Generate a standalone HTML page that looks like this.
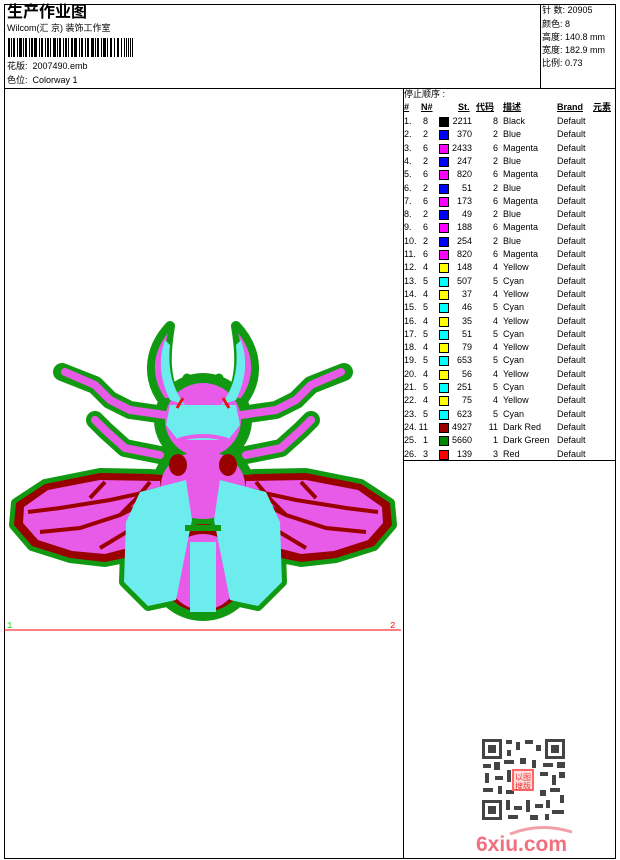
<!DOCTYPE html>
<html><head><meta charset="utf-8"><style>
body{margin:0;width:620px;height:860px;background:#fff;position:relative;font-family:"Liberation Sans","Noto Sans CJK SC",sans-serif;color:#000;overflow:hidden}
.a{position:absolute;white-space:nowrap;font-size:9px;line-height:11px}
.ln{position:absolute;background:#000}
.r{position:absolute;font-size:9px;line-height:11px;white-space:nowrap}
.sw{position:absolute;width:8px;height:8px;border:1px solid #000}
</style></head><body>
<div class="ln" style="left:4px;top:4px;width:612px;height:1px"></div>
<div class="ln" style="left:4px;top:858px;width:612px;height:1px"></div>
<div class="ln" style="left:4px;top:4px;width:1px;height:855px"></div>
<div class="ln" style="left:615px;top:4px;width:1px;height:855px"></div>
<div class="ln" style="left:540px;top:4px;width:1px;height:84px"></div>
<div class="ln" style="left:4px;top:88px;width:612px;height:1px"></div>
<div class="ln" style="left:403px;top:88px;width:1px;height:770px"></div>
<div class="ln" style="left:403px;top:460px;width:213px;height:1px"></div>

<div class="a" style="left:7px;top:3px;font-size:16px;line-height:19px;font-weight:bold">生产作业图</div>
<div class="a" style="left:7px;top:23px">Wilcom(汇 京) 装饰工作室</div>
<svg style="position:absolute;left:8px;top:38px" width="130" height="19">
<g fill="#000">
<rect x="0" y="0" width="2" height="19"/><rect x="3" y="0" width="1" height="19"/><rect x="5" y="0" width="2" height="19"/><rect x="9" y="0" width="1" height="19"/><rect x="11" y="0" width="3" height="19"/><rect x="15" y="0" width="1" height="19"/><rect x="17" y="0" width="2" height="19"/><rect x="21" y="0" width="1" height="19"/><rect x="23" y="0" width="2" height="19"/><rect x="26" y="0" width="3" height="19"/><rect x="31" y="0" width="1" height="19"/><rect x="33" y="0" width="2" height="19"/><rect x="37" y="0" width="1" height="19"/><rect x="39" y="0" width="2" height="19"/><rect x="42" y="0" width="1" height="19"/><rect x="45" y="0" width="3" height="19"/><rect x="49" y="0" width="1" height="19"/><rect x="51" y="0" width="2" height="19"/><rect x="55" y="0" width="1" height="19"/><rect x="57" y="0" width="2" height="19"/><rect x="60" y="0" width="1" height="19"/><rect x="63" y="0" width="2" height="19"/><rect x="66" y="0" width="3" height="19"/><rect x="71" y="0" width="1" height="19"/><rect x="73" y="0" width="2" height="19"/><rect x="77" y="0" width="1" height="19"/><rect x="79" y="0" width="2" height="19"/><rect x="83" y="0" width="3" height="19"/><rect x="87" y="0" width="1" height="19"/><rect x="89" y="0" width="2" height="19"/><rect x="93" y="0" width="1" height="19"/><rect x="95" y="0" width="3" height="19"/><rect x="99" y="0" width="1" height="19"/><rect x="102" y="0" width="2" height="19"/><rect x="106" y="0" width="1" height="19"/><rect x="109" y="0" width="2" height="19"/><rect x="113" y="0" width="1" height="19"/><rect x="116" y="0" width="1" height="19"/><rect x="118" y="0" width="1" height="19"/><rect x="120" y="0" width="1" height="19"/><rect x="122" y="0" width="1" height="19"/><rect x="124" y="0" width="1" height="19"/>
</g></svg>
<div class="a" style="left:7px;top:61px">花版:&nbsp; 2007490.emb</div>
<div class="a" style="left:7px;top:75px">色位:&nbsp; Colorway 1</div>

<div class="a" style="left:542px;top:5px">针 数: 20905</div>
<div class="a" style="left:542px;top:19px">颜色: 8</div>
<div class="a" style="left:542px;top:32px">高度: 140.8 mm</div>
<div class="a" style="left:542px;top:45px">宽度: 182.9 mm</div>
<div class="a" style="left:542px;top:58px">比例: 0.73</div>

<div class="a" style="left:404px;top:89px">停止顺序 :</div>
<div class="a" style="left:404px;top:102px;font-weight:bold;text-decoration:underline">#</div>
<div class="a" style="left:421px;top:102px;font-weight:bold;text-decoration:underline">N#</div>
<div class="a" style="left:458px;top:102px;font-weight:bold;text-decoration:underline">St.</div>
<div class="a" style="left:476px;top:102px;font-weight:bold;text-decoration:underline">代码</div>
<div class="a" style="left:503px;top:102px;font-weight:bold;text-decoration:underline">描述</div>
<div class="a" style="left:557px;top:102px;font-weight:bold;text-decoration:underline">Brand</div>
<div class="a" style="left:593px;top:102px;font-weight:bold;text-decoration:underline">元素</div>

<div id="t"></div>
<script>
var d=[[8,"#000",2211,"Black"],[2,"#0000ff",370,"Blue"],[6,"#ff00ff",2433,"Magenta"],[2,"#0000ff",247,"Blue"],[6,"#ff00ff",820,"Magenta"],[2,"#0000ff",51,"Blue"],[6,"#ff00ff",173,"Magenta"],[2,"#0000ff",49,"Blue"],[6,"#ff00ff",188,"Magenta"],[2,"#0000ff",254,"Blue"],[6,"#ff00ff",820,"Magenta"],[4,"#ffff00",148,"Yellow"],[5,"#00ffff",507,"Cyan"],[4,"#ffff00",37,"Yellow"],[5,"#00ffff",46,"Cyan"],[4,"#ffff00",35,"Yellow"],[5,"#00ffff",51,"Cyan"],[4,"#ffff00",79,"Yellow"],[5,"#00ffff",653,"Cyan"],[4,"#ffff00",56,"Yellow"],[5,"#00ffff",251,"Cyan"],[4,"#ffff00",75,"Yellow"],[5,"#00ffff",623,"Cyan"],[11,"#990000",4927,"Dark Red"],[1,"#008800",5660,"Dark Green"],[3,"#ff0000",139,"Red"]];
var h="";
for(var i=0;i<d.length;i++){var y=116+i*13.3;var r=d[i];
h+='<div class="r" style="left:404px;top:'+y+'px">'+(i+1)+'.</div>';
h+='<div class="r" style="left:414px;top:'+y+'px;width:14px;text-align:right">'+r[0]+'</div>';
h+='<div class="sw" style="left:439px;top:'+(y+1)+'px;background:'+r[1]+'"></div>';
h+='<div class="r" style="left:448px;top:'+y+'px;width:24px;text-align:right">'+r[2]+'</div>';
h+='<div class="r" style="left:484px;top:'+y+'px;width:14px;text-align:right">'+r[0]+'</div>';
h+='<div class="r" style="left:503px;top:'+y+'px">'+r[3]+'</div>';
h+='<div class="r" style="left:557px;top:'+y+'px">Default</div>';}
document.getElementById("t").innerHTML=h;
</script>

<svg style="position:absolute;left:0;top:0" width="620" height="860">
<defs>
<path id="wing" d="M203,478 L150,474 L100,473 L45,484 L16,503 L14,525 L32,546 L70,558 L105,562 L130,557 L175,522 Z"/>
<path id="ely" d="M186,480 L140,492 L126,522 L124,582 L148,606 L176,600 L192,520 Z"/>
<path id="horn" d="M164,402 C148,382 146,352 170,326 C166,350 163,378 178,402 Z"/>
</defs>
<g fill="#119911" stroke="#119911" stroke-width="10" stroke-linejoin="round" stroke-linecap="round">
<use href="#wing"/><use href="#wing" transform="translate(406,0) scale(-1,1)"/>
<use href="#ely"/><use href="#ely" transform="translate(406,0) scale(-1,1)"/>
<use href="#horn"/><use href="#horn" transform="translate(406,0) scale(-1,1)"/>
<ellipse cx="203" cy="568" rx="50" ry="48"/>
<ellipse cx="203" cy="420" rx="44" ry="42"/>
<ellipse cx="203" cy="485" rx="46" ry="38"/>
<path fill="none" stroke-width="18" d="M165,415 L130,410 L110,400 L95,385 L62,372 M160,455 L125,448 L105,430 L95,420 M241,415 L276,410 L296,400 L311,385 L344,372 M246,455 L281,448 L301,430 L311,420"/>
<path stroke-width="9" d="M187,392 L187,378 M219,392 L219,378"/>
</g>
<g fill="#990000"><use href="#wing"/><use href="#wing" transform="translate(406,0) scale(-1,1)"/></g>
<g id="wl">
<path fill="#e85ae8" d="M160,481 L100,480 L48,490 L24,507 L23,523 L38,540 L72,551 L105,554 L128,548 L165,520 Z"/>
<path fill="none" stroke="#990000" stroke-width="4" d="M165,488 L110,500 L60,508 L28,512 M160,495 L120,515 L80,528 L40,532 M160,500 L130,530 L100,548 M150,482 L135,500 L120,515 M105,482 L90,498"/>
</g>
<use href="#wl" transform="translate(406,0) scale(-1,1)"/>
<ellipse cx="203" cy="568" rx="45" ry="44" fill="#990000"/>
<g fill="#e85ae8">
<ellipse cx="203" cy="572" rx="37" ry="38"/>
<ellipse cx="203" cy="485" rx="42" ry="34"/>
<ellipse cx="203" cy="420" rx="38" ry="37"/>
<path d="M165,398 C152,380 150,355 168,333 C163,352 161,375 175,398 Z"/>
<path d="M241,398 C254,380 256,355 238,333 C243,352 245,375 231,398 Z"/>
<path fill="none" stroke="#e85ae8" stroke-width="8" stroke-linecap="round" d="M165,415 L130,410 L110,400 L95,385 L65,372 M160,455 L125,448 L105,430 L95,420 M241,415 L276,410 L296,400 L311,385 L341,372 M246,455 L281,448 L301,430 L311,420"/>
</g>
<g fill="#6cecec">
<rect x="190" y="542" width="26" height="70"/>
<path d="M170,400 C160,380 158,360 165,340 L170,345 C168,365 170,385 185,405 Z"/>
<path d="M236,400 C246,380 248,360 241,340 L236,345 C238,365 236,385 221,405 Z"/>
<path d="M170,405 L236,405 L240,425 L228,440 L178,440 L166,425 Z"/>
<use href="#ely"/><use href="#ely" transform="translate(406,0) scale(-1,1)"/>
</g>
<path d="M178,440 Q203,432 228,440" stroke="#e85ae8" stroke-width="4" fill="none"/>
<g fill="#990000"><ellipse cx="178" cy="465" rx="9" ry="11"/><ellipse cx="228" cy="465" rx="9" ry="11"/></g>
<path d="M183,398 L177,408 M223,398 L229,408" stroke="#ee1111" stroke-width="3"/>
<path d="M185,528 L221,528" stroke="#119911" stroke-width="6"/>
<line x1="4" y1="630" x2="401" y2="630" stroke="#ff0000" stroke-width="1"/>
<text x="7" y="628" font-family="Liberation Mono" font-size="9" fill="#00dd00">1</text>
<text x="390" y="628" font-family="Liberation Mono" font-size="9" fill="#ff0000">2</text>
<g fill="#444">
<rect x="482" y="739" width="20" height="20"/><rect x="545" y="739" width="20" height="20"/><rect x="482" y="800" width="20" height="20"/>
</g>
<g fill="#fff"><rect x="485" y="742" width="14" height="14"/><rect x="548" y="742" width="14" height="14"/><rect x="485" y="803" width="14" height="14"/></g>
<g fill="#444"><rect x="488" y="745" width="8" height="8"/><rect x="551" y="745" width="8" height="8"/><rect x="488" y="806" width="8" height="8"/>
<rect x="506" y="740" width="6" height="4"/><rect x="516" y="742" width="4" height="8"/><rect x="525" y="740" width="8" height="4"/><rect x="536" y="745" width="5" height="6"/><rect x="507" y="750" width="4" height="6"/>
<rect x="483" y="764" width="8" height="4"/><rect x="494" y="762" width="6" height="8"/><rect x="504" y="760" width="10" height="4"/><rect x="520" y="758" width="6" height="6"/><rect x="532" y="760" width="4" height="8"/><rect x="543" y="763" width="10" height="4"/><rect x="557" y="762" width="8" height="6"/>
<rect x="485" y="773" width="4" height="10"/><rect x="495" y="776" width="8" height="4"/><rect x="507" y="770" width="4" height="12"/><rect x="540" y="772" width="8" height="4"/><rect x="552" y="775" width="4" height="10"/><rect x="559" y="772" width="6" height="6"/>
<rect x="483" y="788" width="10" height="4"/><rect x="498" y="786" width="4" height="8"/><rect x="506" y="790" width="8" height="4"/><rect x="540" y="790" width="6" height="6"/><rect x="550" y="788" width="10" height="4"/><rect x="560" y="795" width="4" height="8"/>
<rect x="506" y="800" width="4" height="10"/><rect x="514" y="806" width="8" height="4"/><rect x="526" y="800" width="4" height="12"/><rect x="535" y="804" width="8" height="4"/><rect x="546" y="800" width="4" height="8"/><rect x="552" y="810" width="12" height="4"/><rect x="508" y="815" width="10" height="4"/><rect x="530" y="815" width="8" height="5"/><rect x="545" y="814" width="4" height="6"/>
</g>
<rect x="512" y="769" width="22" height="22" fill="#f66"/>
<rect x="514" y="771" width="18" height="18" fill="#fdd"/>
<text x="515" y="780" font-size="8" fill="#e33">以图</text><text x="515" y="789" font-size="8" fill="#e33">搜版</text>
<path d="M510,834 Q540,822 572,832" stroke="#f0a0a8" stroke-width="3" fill="none"/>
<text x="476" y="851" font-family="Liberation Sans" font-weight="bold" font-size="21" fill="#f07080">6xiu.com</text>
</svg>
</body></html>
